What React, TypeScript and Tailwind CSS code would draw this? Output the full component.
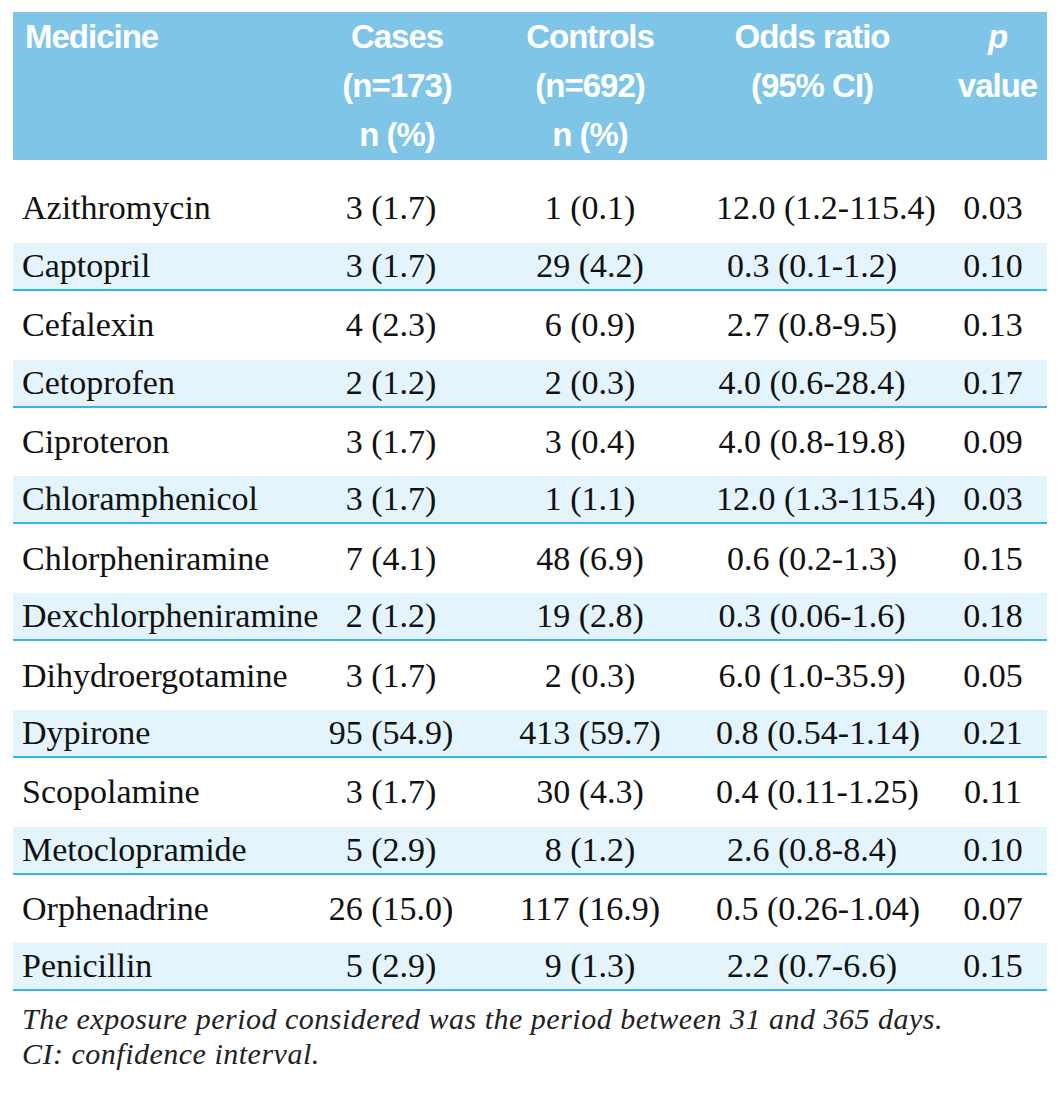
const rows: [string, string, string, string, string][] = [
  ['Azithromycin', '3 (1.7)', '1 (0.1)', '12.0 (1.2-115.4)', '0.03'],
  ['Captopril', '3 (1.7)', '29 (4.2)', '0.3 (0.1-1.2)', '0.10'],
  ['Cefalexin', '4 (2.3)', '6 (0.9)', '2.7 (0.8-9.5)', '0.13'],
  ['Cetoprofen', '2 (1.2)', '2 (0.3)', '4.0 (0.6-28.4)', '0.17'],
  ['Ciproteron', '3 (1.7)', '3 (0.4)', '4.0 (0.8-19.8)', '0.09'],
  ['Chloramphenicol', '3 (1.7)', '1 (1.1)', '12.0 (1.3-115.4)', '0.03'],
  ['Chlorpheniramine', '7 (4.1)', '48 (6.9)', '0.6 (0.2-1.3)', '0.15'],
  ['Dexchlorpheniramine', '2 (1.2)', '19 (2.8)', '0.3 (0.06-1.6)', '0.18'],
  ['Dihydroergotamine', '3 (1.7)', '2 (0.3)', '6.0 (1.0-35.9)', '0.05'],
  ['Dypirone', '95 (54.9)', '413 (59.7)', '0.8 (0.54-1.14)', '0.21'],
  ['Scopolamine', '3 (1.7)', '30 (4.3)', '0.4 (0.11-1.25)', '0.11'],
  ['Metoclopramide', '5 (2.9)', '8 (1.2)', '2.6 (0.8-8.4)', '0.10'],
  ['Orphenadrine', '26 (15.0)', '117 (16.9)', '0.5 (0.26-1.04)', '0.07'],
  ['Penicillin', '5 (2.9)', '9 (1.3)', '2.2 (0.7-6.6)', '0.15'],
];

const grid = 'grid grid-cols-[307px_144px_252px_192px_139px]';

function App() {
  return (
    <div className="min-h-screen bg-white pl-[13px] pt-[12px]">
      <div className="w-[1034px]">
        {/* Header */}
        <div
          className={`${grid} h-[148px] bg-[#7ec5e7] text-white font-bold text-[33px] leading-[49px] tracking-[-1px] font-['Liberation_Sans',Arial,sans-serif]`}
        >
          <div className="pl-[12px]">Medicine</div>
          <div className="pl-[10px] text-center">
            Cases
            <br />
            (n=173)
            <br />
            n (%)
          </div>
          <div className="text-center">
            Controls
            <br />
            (n=692)
            <br />
            n (%)
          </div>
          <div className="text-center">
            Odds ratio
            <br />
            (95% CI)
          </div>
          <div className="pl-[40px] text-center">
            <span className="italic">p</span>
            <br />
            value
          </div>
        </div>

        {/* Body */}
        <div className="pt-[14px] font-['Liberation_Serif',serif] text-[34px] text-[#111]">
          {rows.map((r, i) => (
            <div
              key={r[0]}
              className={`${grid} mt-[10.4px] h-[48px] items-center leading-[46px] ${
                i % 2 === 1 ? 'bg-[#e3f4fc] border-b-2 border-[#3ab4e5]' : ''
              }`}
            >
              <div className="pl-[9px] whitespace-nowrap">{r[0]}</div>
              <div className="text-center whitespace-nowrap pr-[2px]">{r[1]}</div>
              <div className="text-center whitespace-nowrap">{r[2]}</div>
              <div className="text-center whitespace-nowrap">{r[3]}</div>
              <div className="pl-[37px] text-center pr-[6px]">{r[4]}</div>
            </div>
          ))}
        </div>

        {/* Footnote */}
        <div className="pl-[9px] pt-[10px] font-['Liberation_Serif',serif] italic text-[30px] leading-[35px] tracking-[0.5px] text-[#222]">
          <p>The exposure period considered was the period between 31 and 365 days.</p>
          <p>CI: confidence interval.</p>
        </div>
      </div>
    </div>
  );
}

export default App;
